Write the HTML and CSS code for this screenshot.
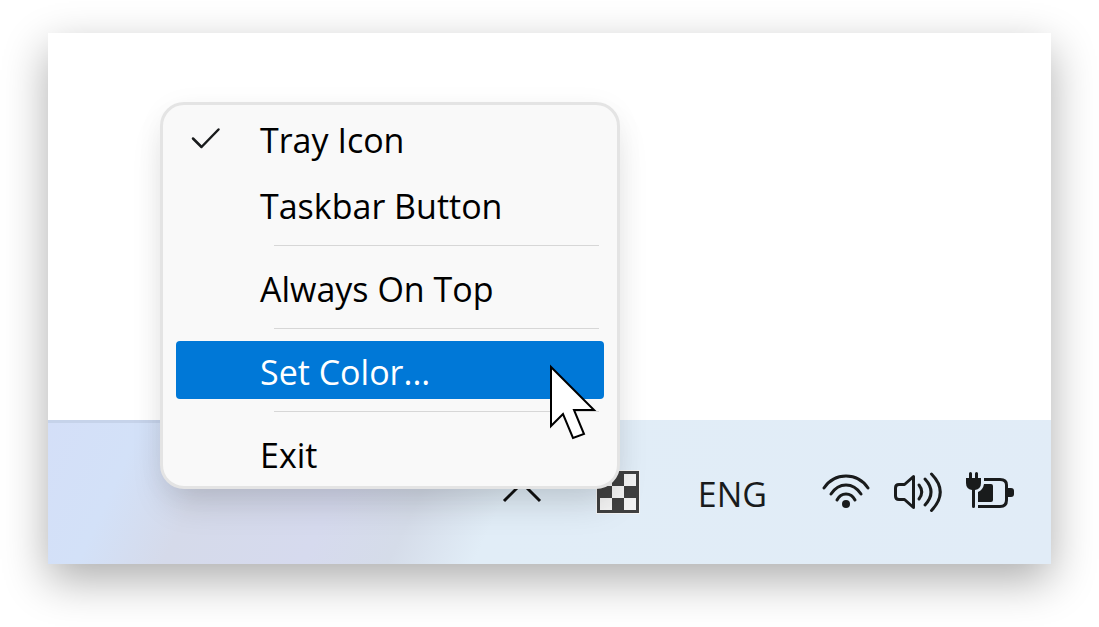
FILE: index.html
```
<!DOCTYPE html>
<html lang="en">
<head>
    <meta charset="UTF-8">
    <meta name="viewport" content="width=device-width, initial-scale=1.0">
    <title>Tray Menu</title>
    <link rel="stylesheet" href="styles.css">
</head>
<body>
    <div class="screen">
        <div class="desktop"></div>

        <div class="taskbar">
            <button class="tray-btn" aria-label="Show hidden icons">
                <svg width="40" height="44" viewBox="0 0 40 44"><path d="M2 31 L20 13 L38 31" fill="none" stroke="#111" stroke-width="3"/></svg>
            </button>
            <button class="tray-btn checker-btn" aria-label="Color">
                <svg width="44" height="44" viewBox="0 0 44 44">
                    <rect width="44" height="44" fill="#f3f3f3"/>
                    <rect x="1" y="1" width="42" height="42" fill="#404040"/>
                    <path d="M4 4h12v12H4zM28 4h12v12H28zM16 16h12v12H16zM4 28h12v12H4zM28 28h12v12H28z" fill="#f3f3f3"/>
                </svg>
            </button>
            <button class="tray-btn lang-btn">ENG</button>
            <button class="tray-btn" aria-label="Network">
                <svg width="48" height="48" viewBox="0 0 48 48" fill="none" stroke="#191b1c" stroke-width="3" stroke-linecap="round">
                    <path d="M2 20 Q10 8 24 8 Q38 8 46 20"/>
                    <path d="M9 26 Q15 17 24 17 Q33 17 39 26"/>
                    <path d="M15 32 Q18 26 24 26 Q30 26 33 32"/>
                    <circle cx="24" cy="36" r="4" fill="#191b1c" stroke="none"/>
                </svg>
            </button>
            <button class="tray-btn" aria-label="Volume">
                <svg width="48" height="48" viewBox="0 0 48 48" fill="none" stroke="#191b1c" stroke-width="3" stroke-linecap="round" stroke-linejoin="round">
                    <path d="M19.5 8.5 V39.5 L10.5 31.5 H5 Q1.5 31.5 1.5 28 V20 Q1.5 16.5 5 16.5 H10.5 Z"/>
                    <path d="M25 17 Q30.5 24 25 31"/>
                    <path d="M31 11 Q43 24 31 37"/>
                    <path d="M37.5 6 Q55 24 37.5 42.5"/>
                </svg>
            </button>
            <button class="tray-btn" aria-label="Battery charging">
                <svg width="48" height="48" viewBox="0 0 48 48" fill="#191b1c">
                    <path d="M3 5.5 Q3 4 4.5 4 Q6 4 6 5.5 V10 H9 V5.5 Q9 4 10.5 4 Q12 4 12 5.5 V10 H15 V15 Q15 21 9 22 V38.5 Q9 40 7.5 40 Q6 40 6 38.5 V22 Q0 21 0 15 V10 H3 Z"/>
                    <path d="M12 24 Q17 22 18 16 H25 Q27 16 27 18 V32 Q27 34 25 34 H12 Z"/>
                    <path d="M18 11.5 H34 Q40.5 11.5 40.5 17 V32 Q40.5 38.5 34 38.5 H12" fill="none" stroke="#191b1c" stroke-width="3"/>
                    <path d="M42 20 H45 Q48 20 48 23 V26 Q48 29 45 29 H42 Z"/>
                </svg>
            </button>
        </div>

        <div class="menu" role="menu">
            <button class="menu-item" role="menuitemcheckbox" aria-checked="true">
                <svg class="check" width="30" height="22" viewBox="0 0 30 22"><path d="M2 11.5 L10.5 20 L27.5 2.5" fill="none" stroke="#191b1c" stroke-width="2.5" stroke-linecap="round" stroke-linejoin="round"/></svg>
                <span class="label">Tray Icon</span>
            </button>
            <button class="menu-item" role="menuitemcheckbox" aria-checked="false"><span class="label">Taskbar Button</span></button>
            <hr class="separator">
            <button class="menu-item" role="menuitemcheckbox" aria-checked="false"><span class="label">Always On Top</span></button>
            <hr class="separator">
            <button class="menu-item selected" role="menuitem"><span class="label">Set Color...</span></button>
            <hr class="separator">
            <button class="menu-item" role="menuitem"><span class="label">Exit</span></button>
        </div>

        <svg class="cursor" width="50" height="78" viewBox="0 0 50 78"><path d="M3 4 V63 L15 51 L25 75 L36 71 L26 47 H46 Z" fill="#fff" stroke="#000" stroke-width="2"/></svg>
    </div>
</body>
</html>
```
FILE: styles.css
```
* {
    box-sizing: border-box;
}
body {
    margin: 0;
    padding: 33px 48px 63px;
    height: 100vh;
    background: #fff;
    font-family: "Open Sans", "Noto Sans", sans-serif;
    color: #000;
    overflow: hidden;
}
button {
    margin: 0;
    padding: 0;
    border: none;
    background: none;
    font-family: inherit;
    color: inherit;
}
svg {
    display: block;
}
.screen {
    position: relative;
    display: flex;
    flex-direction: column;
    height: 100%;
    box-shadow: 0 16px 42px rgba(0, 0, 0, 0.32);
}
.desktop {
    flex: 1;
    background: #fff;
}
.taskbar {
    display: flex;
    align-items: center;
    justify-content: flex-end;
    gap: 24px;
    height: 144px;
    padding-right: 37px;
    background:
        linear-gradient(to right, #c6d3ea, #c6d3ea) 0 0 / 180px 3px no-repeat,
        linear-gradient(115deg, #d4dff8 0, #d3e1f8 9%, #d5daea 17%, #d6daee 30%, #d5dce9 38%, #e1edf7 46%, #e1ecf7 100%);
}
.lang-btn {
    margin: 0 31px 0 32px;
    padding-top: 4px;
    font-size: 34px;
    line-height: 48px;
    color: #191b1c;
}
.checker-btn {
    margin: 0 2px 0 30px;
}
.menu {
    position: absolute;
    left: 112px;
    bottom: 75px;
    display: flex;
    flex-direction: column;
    gap: 8px;
    width: 460px;
    padding: 4px 13px;
    background: #f9f9f9;
    border: 3px solid #e4e4e4;
    border-radius: 24px;
    box-shadow: 0 20px 36px -8px rgba(0, 0, 0, 0.15), 0 4px 30px rgba(0, 0, 0, 0.04);
}
.menu-item {
    display: flex;
    align-items: center;
    height: 58px;
    border-radius: 4px;
    font-size: 34px;
    line-height: 58px;
    text-align: left;
}
.menu-item .label {
    padding: 4px 0 0 84px;
}
.menu-item .check {
    margin-left: 15px;
}
.menu-item .check + .label {
    padding-left: 39px;
}
.menu-item.selected {
    background: #0078d7;
    color: #fff;
}
.separator {
    width: auto;
    height: 1px;
    margin: 4px 5px 4px 98px;
    border: none;
    background: #d7d7d7;
}
.cursor {
    position: absolute;
    left: 500px;
    top: 330px;
}
```
